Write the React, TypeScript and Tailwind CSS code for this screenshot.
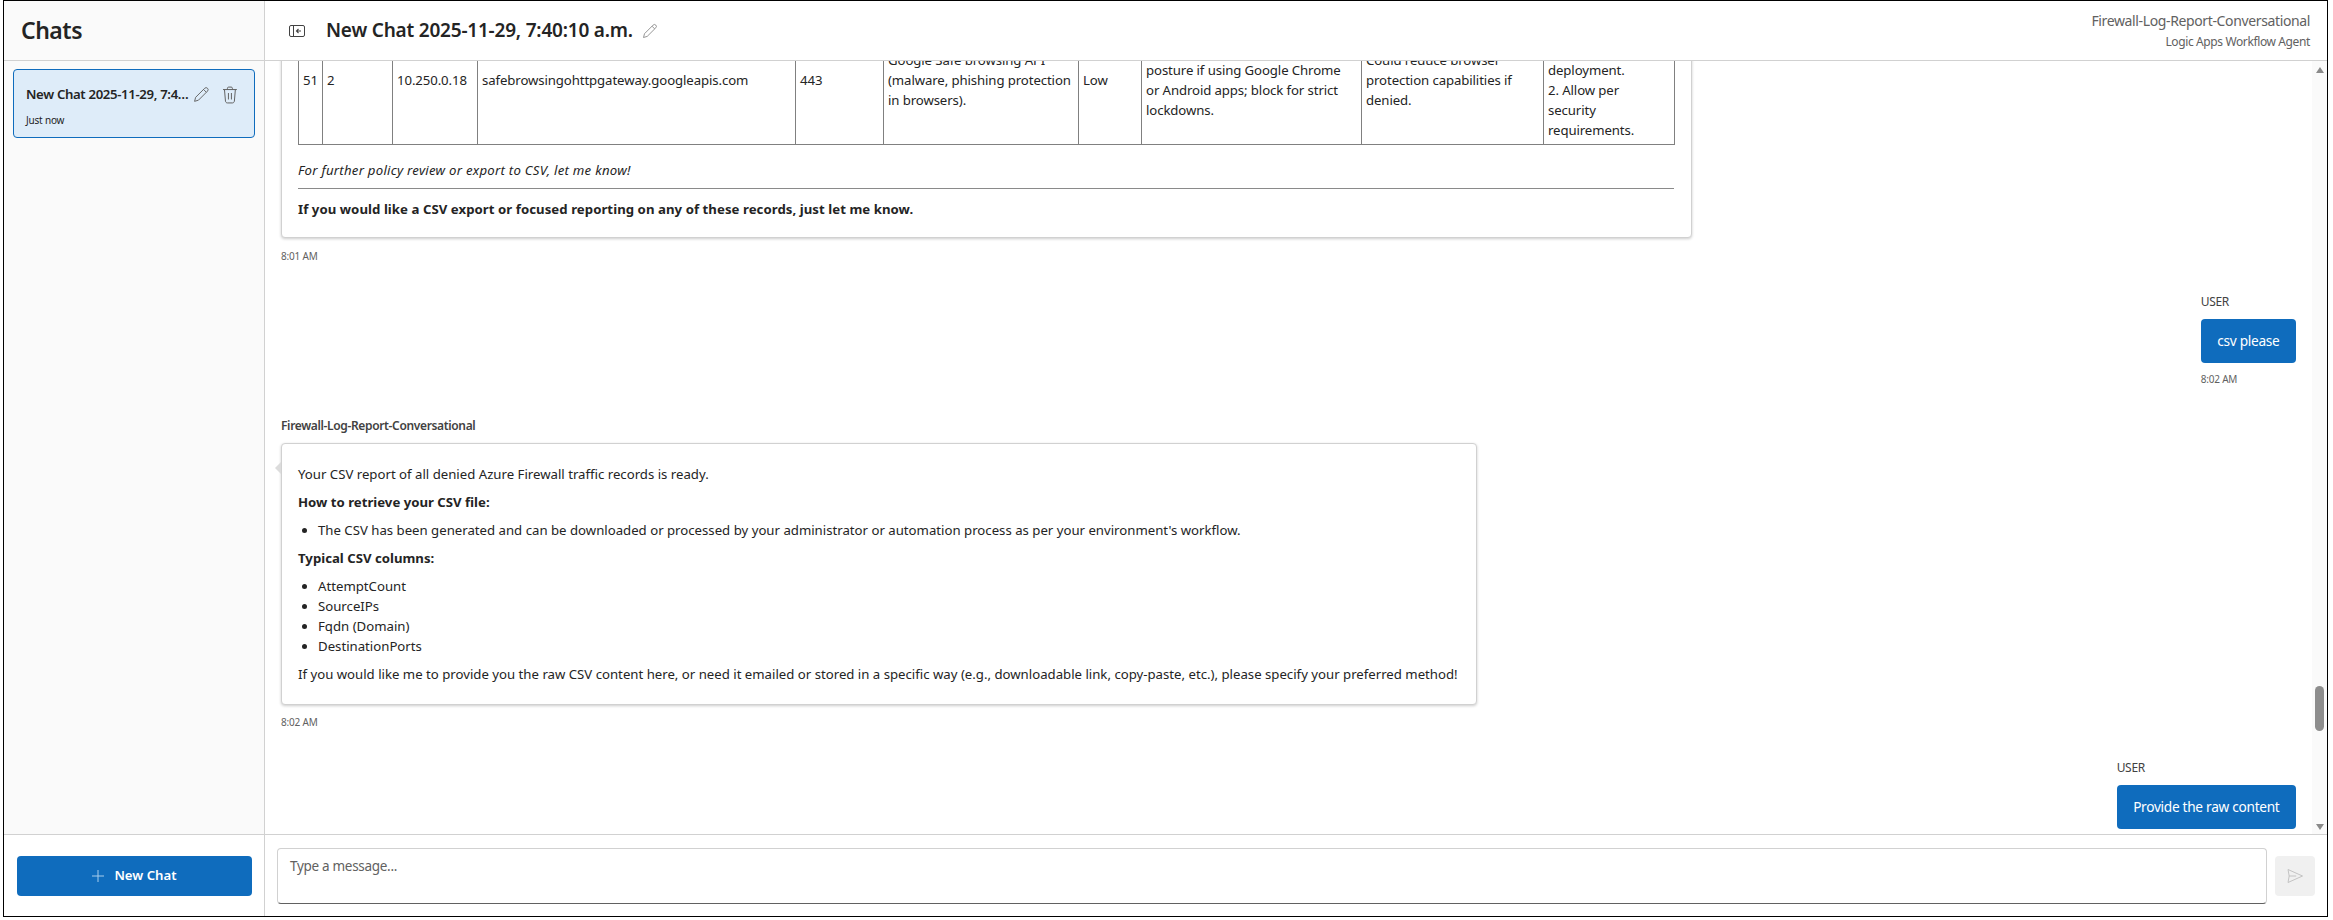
function PencilIcon({ className }: { className: string }) {
  return (
    <svg viewBox="0 0 16 16" fill="none" stroke="currentColor" strokeWidth="0.9" className={className}>
      <path d="M1.5 14.5l1-3.8 8.6-8.6a1.9 1.9 0 0 1 2.7 2.7l-8.6 8.6z" />
      <path d="M10 3.2l2.7 2.7" />
    </svg>
  );
}

function TrashIcon({ className }: { className: string }) {
  return (
    <svg viewBox="0 0 16 18" fill="none" stroke="currentColor" strokeWidth="1" className={className}>
      <path d="M1 3.5h14M5.5 3.5V2.2c0-.7.5-1.2 1.2-1.2h2.6c.7 0 1.2.5 1.2 1.2v1.3" />
      <path d="M2.5 3.5l1 11.6c.1 1 .8 1.9 1.9 1.9h5.2c1.1 0 1.8-.9 1.9-1.9l1-11.6" />
      <path d="M6.5 7v6.5M9.5 7v6.5" />
    </svg>
  );
}

function PanelIcon() {
  return (
    <svg viewBox="0 0 16 12" className="h-3 w-4 text-[#424242]" fill="none" stroke="currentColor">
      <rect x="0.5" y="0.5" width="15" height="11" rx="1.5" />
      <path d="M4.5 0.5v11" />
      <path d="M12 6H7.5M9.5 4L7.5 6l2 2" strokeWidth="1.1" />
    </svg>
  );
}

function SendIcon() {
  return (
    <svg viewBox="0 0 16 16" className="h-4 w-4 text-[#bdbdbd]" fill="none" stroke="currentColor" strokeWidth="0.9">
      <path d="M1 1.5L15.5 8 1 14.5l1.2-6.5z" />
      <path d="M2.2 8h7" />
    </svg>
  );
}

function UserMessage({ text, time }: { text: string; time?: string }) {
  return (
    <div className="flex flex-col items-end">
      <div className="flex flex-col items-start">
        <p className="text-xs leading-4 tracking-[-0.3px] text-[#424242]">USER</p>
        <div className="mt-[9px] flex h-11 items-center rounded bg-[#0f6cbd] px-[16.5px] text-[13.7px] tracking-[-0.3px] text-white">
          {text}
        </div>
        {time && <p className="mt-[10px] text-[10px] leading-3 tracking-[-0.2px] text-[#616161]">{time}</p>}
      </div>
    </div>
  );
}

const cellClass = "border border-[#808080] px-[4px] py-1 align-middle tracking-[-0.1px]";

function ReportCard() {
  return (
    <div className="w-[1411px] rounded border border-[#d1d1d1] bg-white px-4 pt-4 pb-[18px] shadow-[0_1px_3px_rgba(0,0,0,0.2)]">
      <table className="w-[1376px] table-fixed border-collapse leading-5">
        <colgroup>
          <col className="w-[24px]" />
          <col className="w-[70px]" />
          <col className="w-[85px]" />
          <col className="w-[318px]" />
          <col className="w-[88px]" />
          <col className="w-[195px]" />
          <col className="w-[63px]" />
          <col className="w-[220px]" />
          <col className="w-[182px]" />
          <col className="w-[131px]" />
        </colgroup>
        <tbody>
          <tr>
            <td className={cellClass}>51</td>
            <td className={cellClass}>2</td>
            <td className={cellClass}>10.250.0.18</td>
            <td className={cellClass}>safebrowsingohttpgateway.googleapis.com</td>
            <td className={cellClass}>443</td>
            <td className={cellClass + " whitespace-nowrap"}>
              Google Safe browsing API
              <br />
              (malware, phishing protection
              <br />
              in browsers).
            </td>
            <td className={cellClass}>Low</td>
            <td className={cellClass}>
              Allow to improve security
              <br />
              posture if using Google Chrome or Android apps; block for strict lockdowns.
            </td>
            <td className={cellClass}>
              Could reduce browser protection capabilities if denied.
            </td>
            <td className={cellClass}>
              1. Review this
              <br />
              endpoint after
              <br />
              deployment.
              <br />
              2. Allow per security requirements.
            </td>
          </tr>
        </tbody>
      </table>
      <p className="mt-[15px] leading-5 tracking-[0.26px] italic">For further policy review or export to CSV, let me know!</p>
      <hr className="mt-[8px] w-[1376px] border-[#8a8a8a]" />
      <p className="mt-[10px] leading-5 font-bold tracking-[0.05px]">
        If you would like a CSV export or focused reporting on any of these records, just let me know.
      </p>
    </div>
  );
}

function CsvCard() {
  return (
    <div className="relative w-[1196px] rounded border border-[#d1d1d1] bg-white px-4 pt-5 pb-5 leading-5 shadow-[0_1px_3px_rgba(0,0,0,0.2)]">
      <div className="absolute top-[18px] -left-[7px] h-0 w-0 border-y-[6px] border-r-[6px] border-y-transparent border-r-[#dcdcdc]" />
      <p>Your CSV report of all denied Azure Firewall traffic records is ready.</p>
      <p className="mt-2 font-bold">How to retrieve your CSV file:</p>
      <ul className="mt-2 list-disc pl-5">
        <li>
          The CSV has been generated and can be downloaded or processed by your administrator or automation
          process as per your environment's workflow.
        </li>
      </ul>
      <p className="mt-2 font-bold">Typical CSV columns:</p>
      <ul className="mt-2 list-disc pl-5">
        <li>AttemptCount</li>
        <li>SourceIPs</li>
        <li>Fqdn (Domain)</li>
        <li>DestinationPorts</li>
      </ul>
      <p className="mt-2">
        If you would like me to provide you the raw CSV content here, or need it emailed or stored in a specific
        way (e.g., downloadable link, copy-paste, etc.), please specify your preferred method!
      </p>
    </div>
  );
}

export default function App() {
  return (
    <div className="h-[920px] w-[2333px] overflow-hidden bg-white pl-[3px] font-['Noto_Sans',sans-serif] text-[13.2px] text-[#242424]">
      <div className="grid h-[917px] w-[2325px] grid-cols-[261px_1fr] grid-rows-[60px_1fr_81px] border border-black">
        <div className="flex items-center border-r border-b border-[#d1d1d1] bg-[#fafafa] pl-[17px]">
          <h2 className="text-[23px] font-semibold tracking-[-0.5px]">Chats</h2>
        </div>

        <header className="flex items-center justify-between border-b border-[#d1d1d1] pr-[17px] pl-6">
          <div className="flex items-center">
            <PanelIcon />
            <h1 className="ml-[21px] text-[19px] font-semibold tracking-[-0.2px]">New Chat 2025-11-29, 7:40:10 a.m.</h1>
            <PencilIcon className="ml-[9px] h-4 w-4 text-[#8a8a8a]" />
          </div>
          <div className="flex flex-col items-end text-[#616161]">
            <p className="text-[14px] leading-5 tracking-[-0.37px]">Firewall-Log-Report-Conversational</p>
            <p className="mt-[3px] text-[12px] leading-4 tracking-[-0.38px]">Logic Apps Workflow Agent</p>
          </div>
        </header>

        <aside className="border-r border-b border-[#d1d1d1] bg-[#fafafa] px-[9px] pt-2">
          <div className="flex h-[69px] flex-col rounded border border-[#0f6cbd] bg-[#deecf9] pt-[15px] pr-4 pl-3">
            <div className="flex items-center">
              <p className="w-[165px] truncate font-semibold tracking-[-0.35px]">New Chat 2025-11-29, 7:40:10 a.m.</p>
              <PencilIcon className="ml-[4px] h-[17px] w-[17px] text-[#616161]" />
              <TrashIcon className="ml-[12px] h-[18px] w-4 text-[#616161]" />
            </div>
            <p className="mt-[7px] text-[10px] leading-4 tracking-[-0.2px]">Just now</p>
          </div>
        </aside>

        <div className="flex min-h-0 border-b border-[#d1d1d1]">
          <main className="min-w-0 flex-1 overflow-hidden pr-4 pl-4">
            <div className="-mt-[63px]">
              <ReportCard />
              <p className="mt-[12px] text-[10px] leading-3 tracking-[-0.2px] text-[#616161]">8:01 AM</p>
              <div className="mt-[32px]">
                <UserMessage text="csv please" time="8:02 AM" />
              </div>
              <p className="mt-[33px] text-xs leading-4 font-semibold tracking-[-0.35px] text-[#424242]">
                Firewall-Log-Report-Conversational
              </p>
              <div className="mt-[9px]">
                <CsvCard />
              </div>
              <p className="mt-[11px] text-[10px] leading-3 tracking-[-0.2px] text-[#616161]">8:02 AM</p>
              <div className="mt-[32px]">
                <UserMessage text="Provide the raw content" />
              </div>
            </div>
          </main>
          <div className="flex w-[15px] flex-col items-center bg-[#fafafa] pt-[6px] pb-[4px]">
            <div className="h-0 w-0 border-x-[4px] border-b-[6px] border-x-transparent border-b-[#8a8a8a]" />
            <div className="mt-[613px] h-[45px] w-[9px] rounded-full bg-[#8d8d8d]" />
            <div className="mt-auto h-0 w-0 border-x-[4px] border-t-[6px] border-x-transparent border-t-[#8a8a8a]" />
          </div>
        </div>

        <div className="flex items-center border-r border-[#d1d1d1] pr-[12px] pl-[13px]">
          <button className="flex h-10 w-full items-center justify-center gap-[10px] rounded bg-[#0f6cbd] font-semibold text-white">
            <svg viewBox="0 0 12 12" className="h-3 w-3 text-[#a8cdec]" fill="none" stroke="currentColor">
              <path d="M6 0v12M0 6h12" />
            </svg>
            New Chat
          </button>
        </div>

        <div className="flex items-center gap-2 pr-3 pl-3">
          <textarea
            rows={2}
            placeholder="Type a message..."
            className="h-[56px] flex-1 resize-none rounded border border-[#d1d1d1] border-b-[#616161] px-3 py-[7px] text-[13.5px] leading-5 tracking-[-0.3px] outline-none placeholder:text-[#616161]"
          />
          <button className="flex h-10 w-10 items-center justify-center rounded bg-[#f0f0f0]">
            <SendIcon />
          </button>
        </div>
      </div>
    </div>
  );
}
